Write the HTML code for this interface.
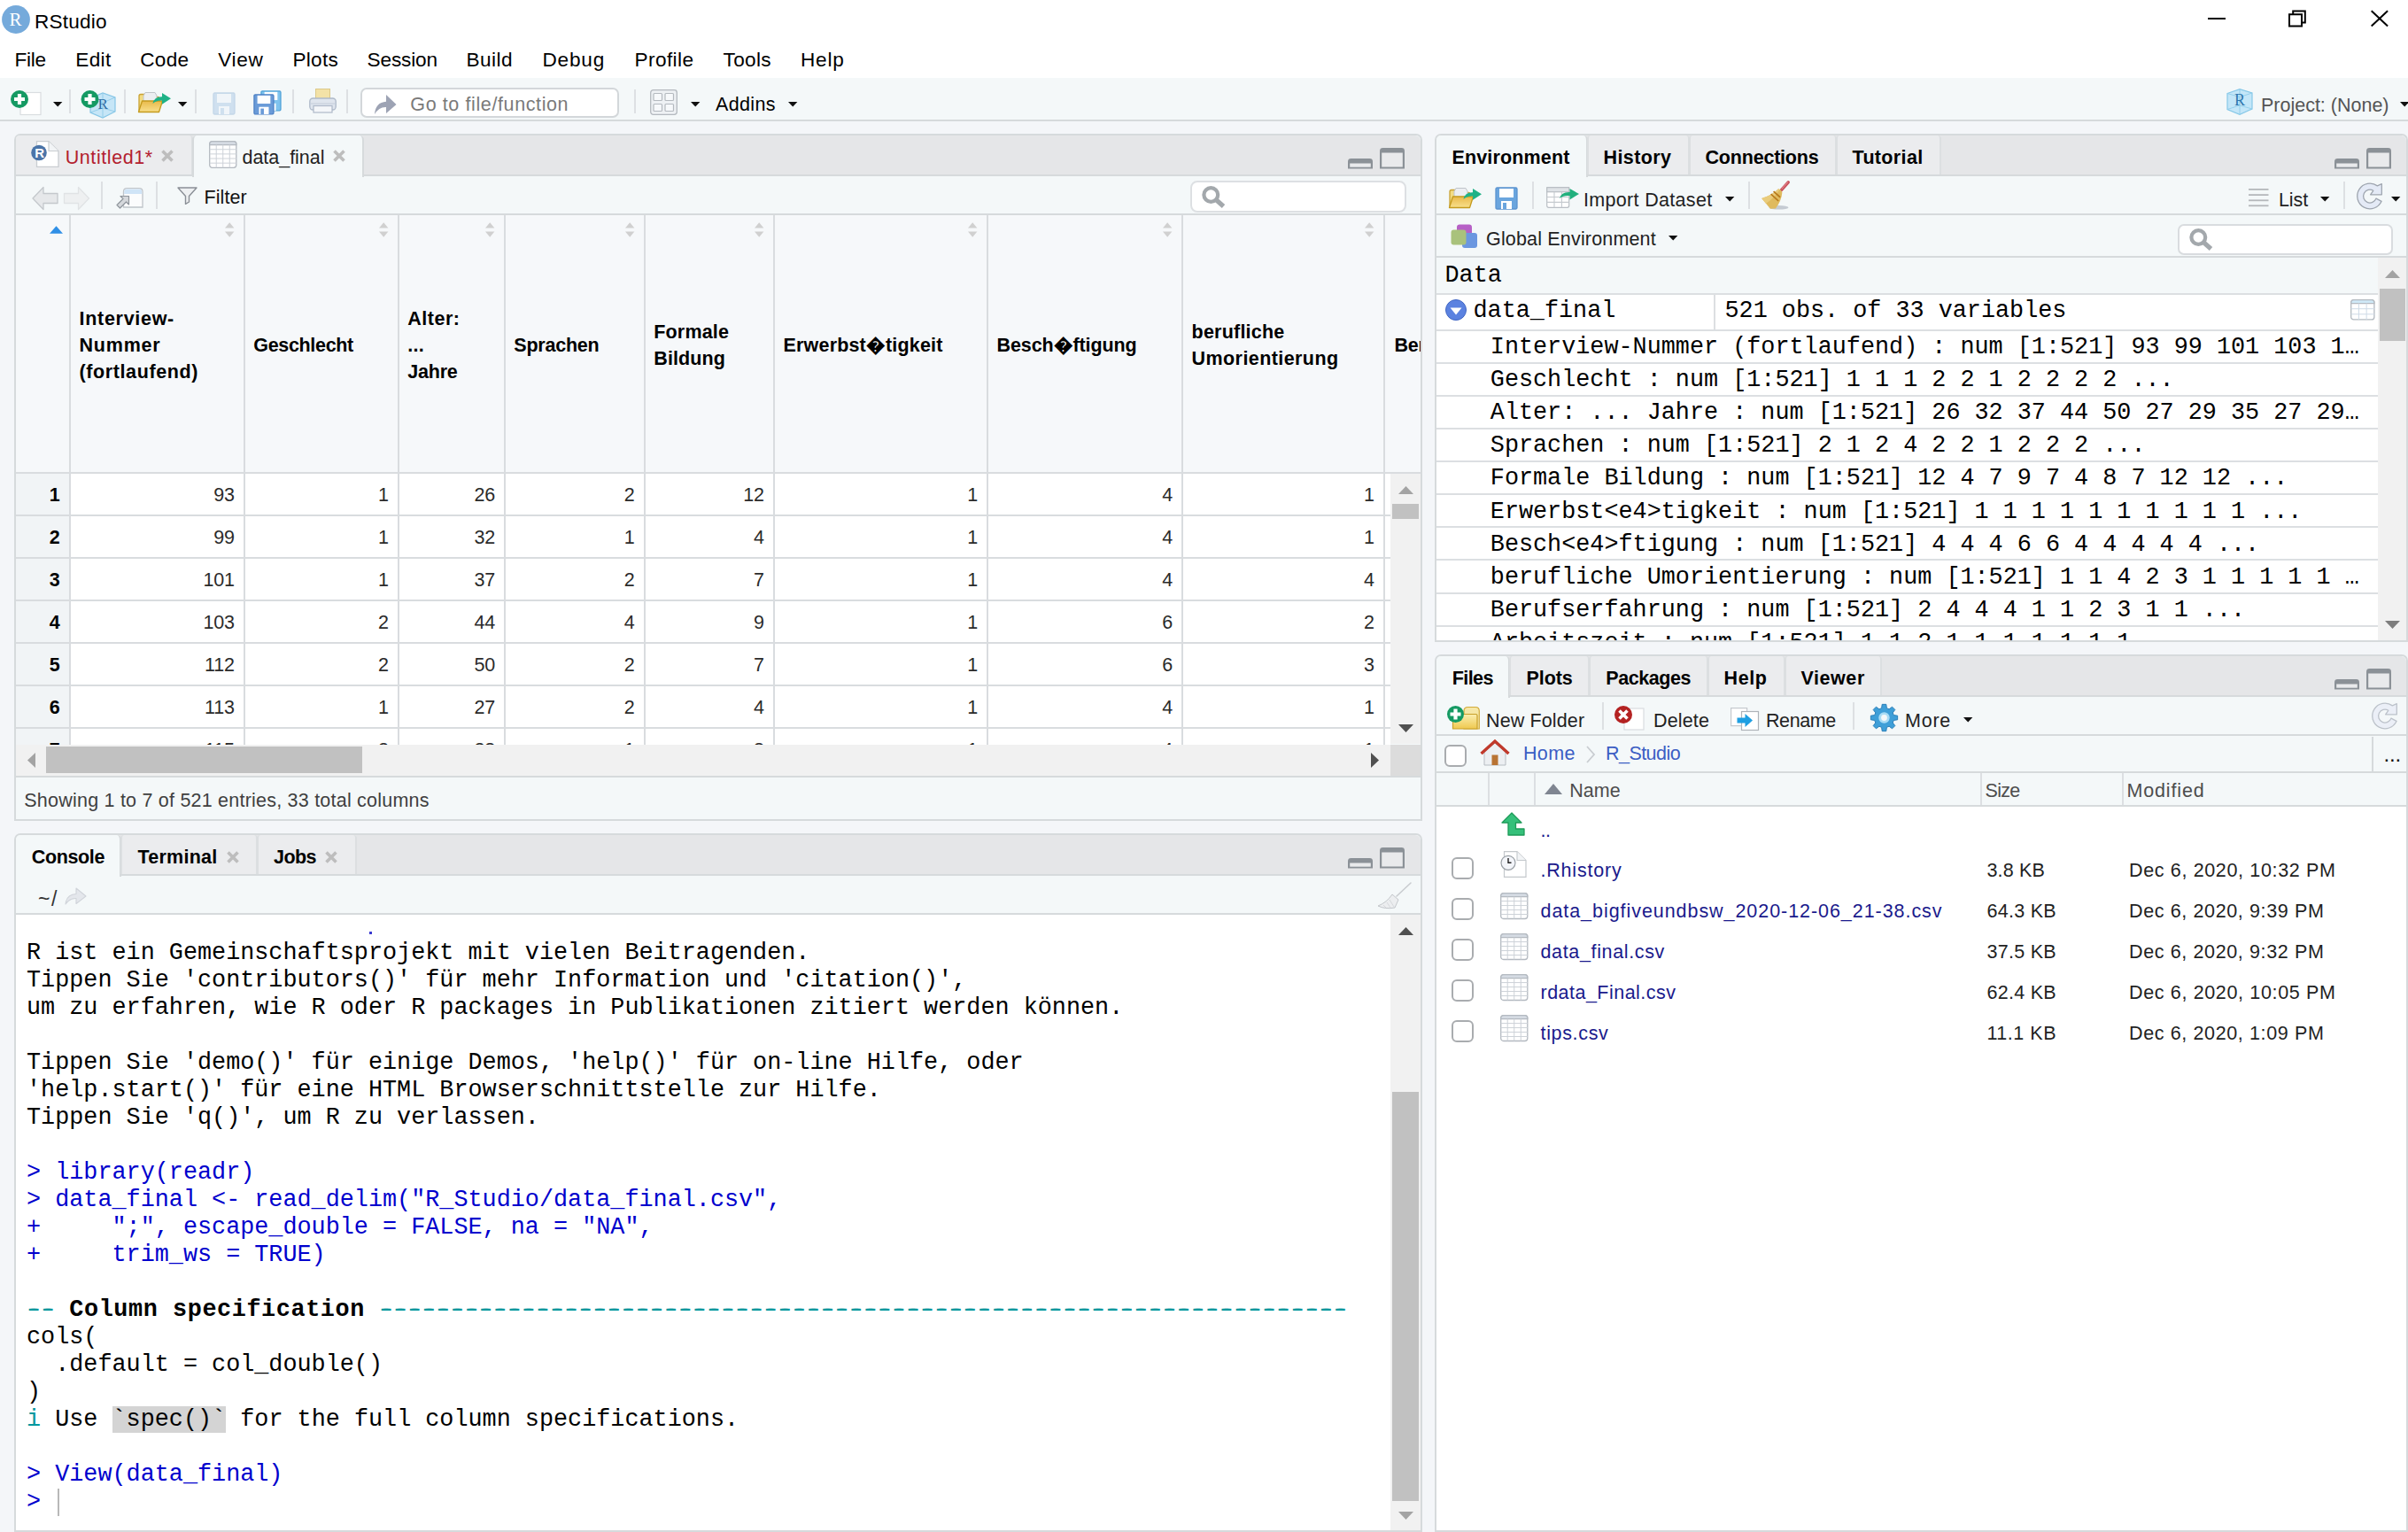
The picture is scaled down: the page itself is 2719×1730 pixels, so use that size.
<!DOCTYPE html>
<html lang="de"><head><meta charset="utf-8"><title>RStudio</title><style>
html,body{margin:0;padding:0;}
body{width:2719px;height:1730px;overflow:hidden;position:relative;background:#f4f6f9;font-family:'Liberation Sans', sans-serif;}
.a{position:absolute;box-sizing:border-box;}
.t{position:absolute;white-space:pre;}
svg{overflow:visible;}
.con{position:absolute;white-space:pre;font-family:'Liberation Mono', monospace;font-size:26.8px;line-height:31px;color:#000;margin:0;}
.con b{letter-spacing:0.6px;}
.dsh{text-shadow:1.7px 0 0 currentColor,-1.7px 0 0 currentColor;}
.env{position:absolute;white-space:pre;font-family:'Liberation Mono', monospace;font-size:26.67px;line-height:37.2px;color:#000;margin:0;}
</style></head>
<body>
<div class="a" style="left:0px;top:0px;width:2719px;height:88px;background:#fff;"></div>
<svg class="a" style="left:2px;top:6px;" width="32" height="32" viewBox="0 0 32 32"><circle cx="16" cy="16" r="15.9" fill="#75aadb"/></svg>
<span class="t" style="font-family:'Liberation Serif', serif;font-size:21px;font-weight:400;color:#fff;line-height:21px;left:10.6px;top:11.7965px;">R</span>
<span class="t" style="font-family:'Liberation Sans', sans-serif;font-size:22.6px;font-weight:400;color:#000;line-height:22.6px;letter-spacing:0.173px;left:39.1px;top:13.9691px;">RStudio</span>
<svg class="a" style="left:2490px;top:8px;" width="210" height="26" viewBox="0 0 210 26"><path d="M3 13H23" stroke="#000" stroke-width="2" fill="none"/><path d="M95 8.3H109V21.5H95Z M99.2 8V4.5H112.8V17.5H109.3" stroke="#000" stroke-width="2" fill="none"/><path d="M187.7 4.2L206.1 21.6 M206.1 4.2L187.7 21.6" stroke="#000" stroke-width="2" fill="none"/></svg>
<span class="t" style="font-family:'Liberation Sans', sans-serif;font-size:22.6px;font-weight:400;color:#000;line-height:22.6px;letter-spacing:-0.252px;left:16.4px;top:57.2691px;">File</span>
<span class="t" style="font-family:'Liberation Sans', sans-serif;font-size:22.6px;font-weight:400;color:#000;line-height:22.6px;letter-spacing:0.316px;left:85.3px;top:57.2691px;">Edit</span>
<span class="t" style="font-family:'Liberation Sans', sans-serif;font-size:22.6px;font-weight:400;color:#000;line-height:22.6px;letter-spacing:0.321px;left:158.2px;top:57.2691px;">Code</span>
<span class="t" style="font-family:'Liberation Sans', sans-serif;font-size:22.6px;font-weight:400;color:#000;line-height:22.6px;letter-spacing:0.655px;left:246.3px;top:57.2691px;">View</span>
<span class="t" style="font-family:'Liberation Sans', sans-serif;font-size:22.6px;font-weight:400;color:#000;line-height:22.6px;letter-spacing:0.253px;left:330.5px;top:57.2691px;">Plots</span>
<span class="t" style="font-family:'Liberation Sans', sans-serif;font-size:22.6px;font-weight:400;color:#000;line-height:22.6px;letter-spacing:-0.127px;left:414.5px;top:57.2691px;">Session</span>
<span class="t" style="font-family:'Liberation Sans', sans-serif;font-size:22.6px;font-weight:400;color:#000;line-height:22.6px;letter-spacing:0.450px;left:526.5px;top:57.2691px;">Build</span>
<span class="t" style="font-family:'Liberation Sans', sans-serif;font-size:22.6px;font-weight:400;color:#000;line-height:22.6px;letter-spacing:0.781px;left:612.5px;top:57.2691px;">Debug</span>
<span class="t" style="font-family:'Liberation Sans', sans-serif;font-size:22.6px;font-weight:400;color:#000;line-height:22.6px;letter-spacing:0.422px;left:716.5px;top:57.2691px;">Profile</span>
<span class="t" style="font-family:'Liberation Sans', sans-serif;font-size:22.6px;font-weight:400;color:#000;line-height:22.6px;letter-spacing:0.350px;left:816.5px;top:57.2691px;">Tools</span>
<span class="t" style="font-family:'Liberation Sans', sans-serif;font-size:22.6px;font-weight:400;color:#000;line-height:22.6px;letter-spacing:0.758px;left:904px;top:57.2691px;">Help</span>
<div class="a" style="left:0px;top:88px;width:2719px;height:49px;background:#f4f8f9;"></div>
<div class="a" style="left:0px;top:135px;width:2719px;height:2px;background:#d6dadc;"></div>
<svg class="a" style="left:12px;top:101px;" width="36" height="32" viewBox="0 0 36 32"><rect x="11" y="3.5" width="23" height="25" fill="#fff" stroke="#d9dde0" stroke-width="1.2"/><circle cx="10" cy="11" r="10" fill="#159a63"/><path d="M4 11H16 M10 5V17" stroke="#fff" stroke-width="4.2" fill="none"/></svg>
<svg class="a" style="left:59.6px;top:115.1px;" width="10.4" height="5.4" viewBox="0 0 10.4 5.4"><path d="M0 0H10.4L5.2 5.4Z" fill="#111"/></svg>
<div class="a" style="left:78px;top:101px;width:2px;height:27px;background:#dde0e3;"></div>
<svg class="a" style="left:91px;top:101px;" width="40" height="34" viewBox="0 0 40 34"><path d="M11 10L25 4L39 9V25L25 32L11 26Z" fill="#c6e6f7" stroke="#86c6e6" stroke-width="1.2"/><path d="M11 10L25 15L39 9M25 15V32M11 26L25 21L39 25M25 4V21" stroke="#8fcbe8" stroke-width="0.9" fill="none"/><text x="19.5" y="21.5" font-family="Liberation Serif, serif" font-size="17" fill="#2e6da4">R</text><circle cx="10.5" cy="11" r="10" fill="#159a63"/><path d="M4.5 11H16.5 M10.5 5V17" stroke="#fff" stroke-width="4.2" fill="none"/></svg>
<div class="a" style="left:139.8px;top:101px;width:2px;height:27px;background:#dde0e3;"></div>
<svg class="a" style="left:154px;top:102px;" width="40" height="28" viewBox="0 0 40 28"><defs><linearGradient id="fg1" x1="0" y1="0" x2="0" y2="1"><stop offset="0" stop-color="#e9b94a"/><stop offset="1" stop-color="#f8e08c"/></linearGradient></defs><path d="M3 23V6.5Q3 4.5 5 4.5H11L14 7.5H24Q26 7.5 26 9.5V13" fill="#f3dc83" stroke="#c9a132" stroke-width="1.3"/><path d="M8 6L10 2.5H21L23 6V14H8Z" fill="#eceef1" stroke="#bfc4c9" stroke-width="1"/><path d="M6.5 12H29.5L25.5 24.5H2.5Z" fill="url(#fg1)" stroke="#c49a1c" stroke-width="1.3" stroke-linejoin="round"/><path d="M18.5 15Q20 7 29 7.3V3L39 9.3L29 15.7V11.5Q22.5 11 18.5 15Z" fill="#1fb287"/></svg>
<svg class="a" style="left:201.4px;top:115.1px;" width="10.4" height="5.4" viewBox="0 0 10.4 5.4"><path d="M0 0H10.4L5.2 5.4Z" fill="#111"/></svg>
<div class="a" style="left:219.5px;top:101px;width:2px;height:27px;background:#dde0e3;"></div>
<svg class="a" style="left:240px;top:104px;" width="26" height="26" viewBox="0 0 26 26"><path d="M1 2.5Q1 1 2.5 1H23.5Q25 1 25 2.5V23.5Q25 25 23.5 25H2.5Q1 25 1 23.5Z" fill="#cfe0ef" stroke="#c3d6e8" stroke-width="1.3"/><rect x="5" y="2" width="16" height="10" fill="#f0f5f9"/><rect x="7" y="16" width="12" height="9" fill="#f0f5f9"/><rect x="9" y="18" width="4" height="7" fill="#cfe0ef"/></svg>
<svg class="a" style="left:286px;top:102px;" width="32" height="28" viewBox="0 0 32 28"><g transform="translate(8,0) scale(0.92)"><path d="M1 2.5Q1 1 2.5 1H23.5Q25 1 25 2.5V23.5Q25 25 23.5 25H2.5Q1 25 1 23.5Z" fill="#7fc3ee" stroke="#4a9fd6" stroke-width="1.3"/><rect x="5" y="2" width="16" height="10" fill="#fff"/><rect x="7" y="16" width="12" height="9" fill="#fff"/><rect x="9" y="18" width="4" height="7" fill="#7fc3ee"/></g><g transform="translate(0,4) scale(0.92)"><path d="M1 2.5Q1 1 2.5 1H23.5Q25 1 25 2.5V23.5Q25 25 23.5 25H2.5Q1 25 1 23.5Z" fill="#6a9bd8" stroke="#4a7fc4" stroke-width="1.3"/><rect x="5" y="2" width="16" height="10" fill="#fff"/><rect x="7" y="16" width="12" height="9" fill="#fff"/><rect x="9" y="18" width="4" height="7" fill="#6a9bd8"/></g></svg>
<div class="a" style="left:329.6px;top:101px;width:2px;height:27px;background:#dde0e3;"></div>
<svg class="a" style="left:348.5px;top:100px;" width="31" height="28" viewBox="0 0 31 28"><rect x="7.5" y="0.5" width="16" height="13" fill="#f3e2a7" stroke="#dcc98a" stroke-width="1"/><rect x="0.8" y="11" width="29.4" height="13" rx="3.5" fill="#dfe5ee" stroke="#aeb9c9" stroke-width="1.3"/><rect x="5" y="19.5" width="21" height="7.5" fill="#f4f6f9" stroke="#aeb9c9" stroke-width="1.2"/><path d="M2 17H29" stroke="#c3ccd9" stroke-width="1"/></svg>
<div class="a" style="left:391.4px;top:101px;width:2px;height:27px;background:#dde0e3;"></div>
<div class="a" style="left:407px;top:98.5px;width:292px;height:34.5px;background:#fff;border:2px solid #d3d7da;border-radius:7px;"></div>
<svg class="a" style="left:422px;top:106px;" width="26" height="24" viewBox="0 0 26 24"><path d="M1 23Q2 9.5 14 8.8V1L25.5 12L14 22V15Q6 14.5 1 23Z" fill="#9da3b4"/></svg>
<span class="t" style="font-family:'Liberation Sans', sans-serif;font-size:21.5px;font-weight:400;color:#7a7a7a;line-height:21.5px;letter-spacing:0.609px;left:463.3px;top:108.1px;">Go to file/function</span>
<div class="a" style="left:716px;top:101px;width:2px;height:27px;background:#dde0e3;"></div>
<svg class="a" style="left:734px;top:101px;" width="31" height="29" viewBox="0 0 31 29"><rect x="0.7" y="0.7" width="29.6" height="27.6" rx="3" fill="#eef1f4" stroke="#b4b9bf" stroke-width="1.3"/><rect x="4" y="4.5" width="9.5" height="8" rx="1" fill="#f7f9fb" stroke="#b4b9bf" stroke-width="1.2"/><rect x="17" y="4.5" width="9.5" height="8" rx="1" fill="#f7f9fb" stroke="#b4b9bf" stroke-width="1.2"/><rect x="4" y="16.5" width="9.5" height="8" rx="1" fill="#f7f9fb" stroke="#b4b9bf" stroke-width="1.2"/><rect x="17" y="16.5" width="9.5" height="8" rx="1" fill="#f7f9fb" stroke="#b4b9bf" stroke-width="1.2"/></svg>
<svg class="a" style="left:779.8px;top:114.9px;" width="10.4" height="5.4" viewBox="0 0 10.4 5.4"><path d="M0 0H10.4L5.2 5.4Z" fill="#111"/></svg>
<span class="t" style="font-family:'Liberation Sans', sans-serif;font-size:21.5px;font-weight:400;color:#000;line-height:21.5px;letter-spacing:0.358px;left:808px;top:107.8px;">Addins</span>
<svg class="a" style="left:889.8px;top:114.9px;" width="10.4" height="5.4" viewBox="0 0 10.4 5.4"><path d="M0 0H10.4L5.2 5.4Z" fill="#111"/></svg>
<svg class="a" style="left:2514px;top:100px;" width="30" height="30" viewBox="0 0 30 30"><path d="M1 5.5L15 0.7L29 5V23L15 29.3L1 23.5Z" fill="#c3e6f8" stroke="#86c8e8" stroke-width="1.2"/><path d="M1 5.5L15 9.5L29 5M15 9.5V29.3M1 23.5L15 19L29 23M15 0.7V19" stroke="#8fcdea" stroke-width="0.9" fill="none"/><text x="9" y="18.6" font-family="Liberation Serif, serif" font-size="18" fill="#2f77ad">R</text></svg>
<span class="t" style="font-family:'Liberation Sans', sans-serif;font-size:21.5px;font-weight:400;color:#555;line-height:21.5px;letter-spacing:-0.006px;left:2553px;top:108.8px;">Project: (None)</span>
<svg class="a" style="left:2709.8px;top:115px;" width="10.4" height="5.4" viewBox="0 0 10.4 5.4"><path d="M0 0H10.4L5.2 5.4Z" fill="#111"/></svg>
<div class="a" style="left:16px;top:151px;width:1590px;height:776px;background:#f4f8f9;border:2px solid #d6dadc;border-radius:7px 7px 0 0;"></div>
<div class="a" style="left:18px;top:153px;width:1586px;height:44px;background:#e5e6e8;border-radius:6px 6px 0 0;"></div>
<div class="a" style="left:18px;top:197px;width:1586px;height:2px;background:#d6dadc;"></div>
<div class="a" style="left:18px;top:153px;width:200px;height:44px;background:#ebecee;border:2px solid #dcdfe1;border-radius:4px 4px 0 0;border-bottom:none;border-top:none;border-left:none;"></div>
<div class="a" style="left:217px;top:153px;width:194px;height:47px;background:#f4f8f9;border:2px solid #d6dadc;border-radius:5px 5px 0 0;border-bottom:none;border-top:none;"></div>
<svg class="a" style="left:34.5px;top:158.8px;" width="32" height="30" viewBox="0 0 32 30"><path d="M6.5 0.7H20L31 11.5V29.3H6.5Z" fill="#fff" stroke="#c9cdd1" stroke-width="1.3"/><path d="M20 0.7V11.5H31" fill="#f2f4f6" stroke="#c9cdd1" stroke-width="1.2"/><circle cx="9" cy="13.5" r="8.8" fill="#4a74a8"/><text x="4.3" y="19" font-family="Liberation Sans, sans-serif" font-weight="700" font-size="15" fill="#fff">R</text></svg>
<span class="t" style="font-family:'Liberation Sans', sans-serif;font-size:21.5px;font-weight:400;color:#b3202f;line-height:21.5px;letter-spacing:0.587px;left:73.7px;top:167.6px;">Untitled1*</span>
<svg class="a" style="left:182.3px;top:169.4px;" width="14" height="14" viewBox="0 0 14 14"><path d="M1.5 1.5L12.5 12.5M12.5 1.5L1.5 12.5" stroke="#bdbdbd" stroke-width="3.6" fill="none"/></svg>
<svg class="a" style="left:236.3px;top:159px;" width="31.5" height="31" viewBox="0 0 31.5 31"><rect x="0.7" y="0.7" width="30.1" height="29.6" rx="3" fill="#fff" stroke="#b3b9c0" stroke-width="1.3"/><path d="M0.7 4.6V3.7Q0.7 0.7 3.7 0.7H27.8Q30.8 0.7 30.8 3.7V4.6Z" fill="#d5dbe3" stroke="#b3b9c0" stroke-width="1.3"/><path d="M8.225 4.6V30.3" stroke="#cdd2d8" stroke-width="1"/><path d="M15.75 4.6V30.3" stroke="#cdd2d8" stroke-width="1"/><path d="M23.275 4.6V30.3" stroke="#cdd2d8" stroke-width="1"/><path d="M0.7 9.74H30.8" stroke="#cdd2d8" stroke-width="1"/><path d="M0.7 14.88H30.8" stroke="#cdd2d8" stroke-width="1"/><path d="M0.7 20.02H30.8" stroke="#cdd2d8" stroke-width="1"/><path d="M0.7 25.16H30.8" stroke="#cdd2d8" stroke-width="1"/></svg>
<span class="t" style="font-family:'Liberation Sans', sans-serif;font-size:21.5px;font-weight:400;color:#222;line-height:21.5px;letter-spacing:-0.035px;left:273.5px;top:167.6px;">data_final</span>
<svg class="a" style="left:376.1px;top:169.4px;" width="14" height="14" viewBox="0 0 14 14"><path d="M1.5 1.5L12.5 12.5M12.5 1.5L1.5 12.5" stroke="#bdbdbd" stroke-width="3.6" fill="none"/></svg>
<svg class="a" style="left:1522px;top:179.2px;" width="28" height="11.6" viewBox="0 0 28 11.6"><path d="M0 11.6V3.5Q0 0 3.5 0H24.5Q28 0 28 3.5V11.6Z" fill="#8b9197"/><rect x="2.2" y="5.5" width="23.6" height="4.2" fill="#e9eaec"/></svg>
<svg class="a" style="left:1558px;top:167.2px;" width="28" height="23.6" viewBox="0 0 28 23.6"><path d="M0 23.6V3.5Q0 0 3.5 0H24.5Q28 0 28 3.5V23.6Z" fill="#8b9197"/><rect x="2.2" y="5.5" width="23.6" height="16" fill="#e9eaec"/></svg>
<div class="a" style="left:18px;top:241px;width:1586px;height:2px;background:#d6dadc;"></div>
<svg class="a" style="left:35.5px;top:209.8px;" width="66" height="28" viewBox="0 0 66 28"><path d="M1 14L13 1.5V8.5H29V19.5H13V26.5Z" fill="#e6e8ea" stroke="#c4c8cc" stroke-width="1.3" stroke-linejoin="round"/><path d="M64.5 14L52.5 1.5V8.5H36.5V19.5H52.5V26.5Z" fill="#eef0f1" stroke="#e0e3e5" stroke-width="1.3" stroke-linejoin="round"/></svg>
<div class="a" style="left:113.8px;top:205px;width:2px;height:31px;background:#dde0e3;"></div>
<svg class="a" style="left:130.5px;top:211.5px;" width="31" height="23" viewBox="0 0 31 23"><path d="M8.5 22V4.5Q8.5 0.7 12.5 0.7H26Q30 0.7 30 4.5V22Z" fill="#fbfcfd" stroke="#bfc4c9" stroke-width="1.3"/><path d="M9.2 7V4.5Q9.2 1.4 12.5 1.4H26Q29.3 1.4 29.3 4.5V7Z" fill="#cfe4f7"/><path d="M1 19.5L8 12.5L5 9.5H14.5V19L11.5 16L4.5 23Z" fill="#d5d8dc" stroke="#8f959c" stroke-width="1.2" stroke-linejoin="round"/></svg>
<div class="a" style="left:175.7px;top:205px;width:2px;height:31px;background:#dde0e3;"></div>
<svg class="a" style="left:199.5px;top:210.5px;" width="23" height="20" viewBox="0 0 23 20"><path d="M1 1H22L13.5 10.5V17L9.5 19.3V10.5Z" fill="#eef0f2" stroke="#8a8f96" stroke-width="1.4" stroke-linejoin="round"/></svg>
<span class="t" style="font-family:'Liberation Sans', sans-serif;font-size:21.5px;font-weight:400;color:#111;line-height:21.5px;letter-spacing:0.070px;left:230.5px;top:212.6px;">Filter</span>
<div class="a" style="left:1343.8px;top:203.8px;width:244.4px;height:36.2px;background:#fff;border:2px solid #dde0e3;border-radius:8px;"></div>
<svg class="a" style="left:1357px;top:210px;" width="27" height="25" viewBox="0 0 27 25"><circle cx="10.3" cy="10" r="7.9" fill="none" stroke="#a3a8ac" stroke-width="4.2"/><path d="M16 15.5L24.5 23" stroke="#a3a8ac" stroke-width="5.2" stroke-linecap="butt"/></svg>
<div class="a" style="left:18px;top:243px;width:1586px;height:290px;background:#f6f8fa;"></div>
<div class="a" style="left:18px;top:535px;width:1552px;height:305.6px;background:#fff;"></div>
<div class="a" style="left:18px;top:535px;width:61px;height:305.6px;background:#f1f4f6;"></div>
<div class="a" style="left:18px;top:533px;width:1586px;height:2px;background:#d9dcdf;"></div>
<div class="a" style="left:18px;top:581px;width:1552px;height:2px;background:#d9dcdf;"></div>
<div class="a" style="left:18px;top:629px;width:1552px;height:2px;background:#d9dcdf;"></div>
<div class="a" style="left:18px;top:677px;width:1552px;height:2px;background:#d9dcdf;"></div>
<div class="a" style="left:18px;top:725px;width:1552px;height:2px;background:#d9dcdf;"></div>
<div class="a" style="left:18px;top:773px;width:1552px;height:2px;background:#d9dcdf;"></div>
<div class="a" style="left:18px;top:821px;width:1552px;height:2px;background:#d9dcdf;"></div>
<div class="a" style="left:78px;top:243px;width:2px;height:597.6px;background:#d9dcdf;"></div>
<div class="a" style="left:274.8px;top:243px;width:2px;height:597.6px;background:#d9dcdf;"></div>
<div class="a" style="left:448.8px;top:243px;width:2px;height:597.6px;background:#d9dcdf;"></div>
<div class="a" style="left:569px;top:243px;width:2px;height:597.6px;background:#d9dcdf;"></div>
<div class="a" style="left:726.7px;top:243px;width:2px;height:597.6px;background:#d9dcdf;"></div>
<div class="a" style="left:872.9px;top:243px;width:2px;height:597.6px;background:#d9dcdf;"></div>
<div class="a" style="left:1114px;top:243px;width:2px;height:597.6px;background:#d9dcdf;"></div>
<div class="a" style="left:1334px;top:243px;width:2px;height:597.6px;background:#d9dcdf;"></div>
<div class="a" style="left:1561.8px;top:243px;width:2px;height:597.6px;background:#d9dcdf;"></div>
<svg class="a" style="left:55.5px;top:254.5px;" width="15" height="9" viewBox="0 0 15 9"><path d="M0 8.7L7.5 0.3L15 8.7Z" fill="#2f8fe6"/></svg>
<svg class="a" style="left:254.1px;top:250.5px;" width="10.4" height="17" viewBox="0 0 10.4 17"><path d="M0 6.5L5.2 0.3L10.4 6.5Z M0 10.5L5.2 16.7L10.4 10.5Z" fill="#d0d0d0"/></svg>
<svg class="a" style="left:428.1px;top:250.5px;" width="10.4" height="17" viewBox="0 0 10.4 17"><path d="M0 6.5L5.2 0.3L10.4 6.5Z M0 10.5L5.2 16.7L10.4 10.5Z" fill="#d0d0d0"/></svg>
<svg class="a" style="left:548.3px;top:250.5px;" width="10.4" height="17" viewBox="0 0 10.4 17"><path d="M0 6.5L5.2 0.3L10.4 6.5Z M0 10.5L5.2 16.7L10.4 10.5Z" fill="#d0d0d0"/></svg>
<svg class="a" style="left:706px;top:250.5px;" width="10.4" height="17" viewBox="0 0 10.4 17"><path d="M0 6.5L5.2 0.3L10.4 6.5Z M0 10.5L5.2 16.7L10.4 10.5Z" fill="#d0d0d0"/></svg>
<svg class="a" style="left:852.2px;top:250.5px;" width="10.4" height="17" viewBox="0 0 10.4 17"><path d="M0 6.5L5.2 0.3L10.4 6.5Z M0 10.5L5.2 16.7L10.4 10.5Z" fill="#d0d0d0"/></svg>
<svg class="a" style="left:1093.3px;top:250.5px;" width="10.4" height="17" viewBox="0 0 10.4 17"><path d="M0 6.5L5.2 0.3L10.4 6.5Z M0 10.5L5.2 16.7L10.4 10.5Z" fill="#d0d0d0"/></svg>
<svg class="a" style="left:1313.3px;top:250.5px;" width="10.4" height="17" viewBox="0 0 10.4 17"><path d="M0 6.5L5.2 0.3L10.4 6.5Z M0 10.5L5.2 16.7L10.4 10.5Z" fill="#d0d0d0"/></svg>
<svg class="a" style="left:1541.1px;top:250.5px;" width="10.4" height="17" viewBox="0 0 10.4 17"><path d="M0 6.5L5.2 0.3L10.4 6.5Z M0 10.5L5.2 16.7L10.4 10.5Z" fill="#d0d0d0"/></svg>
<span class="t" style="font-family:'Liberation Sans', sans-serif;font-size:21.5px;font-weight:700;color:#000;line-height:21.5px;letter-spacing:0.713px;left:89.5px;top:349.9px;">Interview-</span>
<span class="t" style="font-family:'Liberation Sans', sans-serif;font-size:21.5px;font-weight:700;color:#000;line-height:21.5px;letter-spacing:0.797px;left:89.5px;top:379.7px;">Nummer</span>
<span class="t" style="font-family:'Liberation Sans', sans-serif;font-size:21.5px;font-weight:700;color:#000;line-height:21.5px;letter-spacing:0.608px;left:89.5px;top:409.5px;">(fortlaufend)</span>
<span class="t" style="font-family:'Liberation Sans', sans-serif;font-size:21.5px;font-weight:700;color:#000;line-height:21.5px;letter-spacing:-0.332px;left:286.3px;top:379.7px;">Geschlecht</span>
<span class="t" style="font-family:'Liberation Sans', sans-serif;font-size:21.5px;font-weight:700;color:#000;line-height:21.5px;letter-spacing:0.507px;left:460.3px;top:349.9px;">Alter:</span>
<span class="t" style="font-family:'Liberation Sans', sans-serif;font-size:21.5px;font-weight:700;color:#000;line-height:21.5px;letter-spacing:0.259px;left:460.3px;top:379.7px;">...</span>
<span class="t" style="font-family:'Liberation Sans', sans-serif;font-size:21.5px;font-weight:700;color:#000;line-height:21.5px;letter-spacing:-0.235px;left:460.3px;top:409.5px;">Jahre</span>
<span class="t" style="font-family:'Liberation Sans', sans-serif;font-size:21.5px;font-weight:700;color:#000;line-height:21.5px;letter-spacing:-0.223px;left:580.3px;top:379.7px;">Sprachen</span>
<span class="t" style="font-family:'Liberation Sans', sans-serif;font-size:21.5px;font-weight:700;color:#000;line-height:21.5px;letter-spacing:0.151px;left:738.3px;top:364.8px;">Formale</span>
<span class="t" style="font-family:'Liberation Sans', sans-serif;font-size:21.5px;font-weight:700;color:#000;line-height:21.5px;letter-spacing:0.098px;left:738.3px;top:394.6px;">Bildung</span>
<span class="t" style="font-family:'Liberation Sans', sans-serif;font-size:21.5px;font-weight:700;color:#000;line-height:21.5px;letter-spacing:0.161px;left:884.6px;top:379.7px;">Erwerbst�tigkeit</span>
<span class="t" style="font-family:'Liberation Sans', sans-serif;font-size:21.5px;font-weight:700;color:#000;line-height:21.5px;letter-spacing:-0.112px;left:1125.6px;top:379.7px;">Besch�ftigung</span>
<span class="t" style="font-family:'Liberation Sans', sans-serif;font-size:21.5px;font-weight:700;color:#000;line-height:21.5px;letter-spacing:0.215px;left:1345.6px;top:364.8px;">berufliche</span>
<span class="t" style="font-family:'Liberation Sans', sans-serif;font-size:21.5px;font-weight:700;color:#000;line-height:21.5px;letter-spacing:0.416px;left:1345.6px;top:394.6px;">Umorientierung</span>
<div class="a" style="left:1564px;top:360px;width:40px;height:60px;overflow:hidden;"><span class="t" style="left:10.5px;top:19.7002px;font-size:21.5px;line-height:21.5px;font-weight:700;letter-spacing:-0.3px;">Berufserfahrung</span></div>
<div class="a" style="left:0;top:535px;width:1570px;height:305.6px;overflow:hidden;">
<span class="t" style="right:1502.2px;top:14.1003px;font-size:21.5px;line-height:21.5px;font-weight:700;">1</span>
<span class="t" style="right:1305.3px;top:14.1003px;font-size:21.5px;line-height:21.5px;color:#2b2b2b;letter-spacing:-0.2px;">93</span>
<span class="t" style="right:1131.3px;top:14.1003px;font-size:21.5px;line-height:21.5px;color:#2b2b2b;letter-spacing:-0.2px;">1</span>
<span class="t" style="right:1011.1px;top:14.1003px;font-size:21.5px;line-height:21.5px;color:#2b2b2b;letter-spacing:-0.2px;">26</span>
<span class="t" style="right:853.4px;top:14.1003px;font-size:21.5px;line-height:21.5px;color:#2b2b2b;letter-spacing:-0.2px;">2</span>
<span class="t" style="right:707.2px;top:14.1003px;font-size:21.5px;line-height:21.5px;color:#2b2b2b;letter-spacing:-0.2px;">12</span>
<span class="t" style="right:466.1px;top:14.1003px;font-size:21.5px;line-height:21.5px;color:#2b2b2b;letter-spacing:-0.2px;">1</span>
<span class="t" style="right:246.1px;top:14.1003px;font-size:21.5px;line-height:21.5px;color:#2b2b2b;letter-spacing:-0.2px;">4</span>
<span class="t" style="right:18.3px;top:14.1003px;font-size:21.5px;line-height:21.5px;color:#2b2b2b;letter-spacing:-0.2px;">1</span>
<span class="t" style="right:1502.2px;top:62.1003px;font-size:21.5px;line-height:21.5px;font-weight:700;">2</span>
<span class="t" style="right:1305.3px;top:62.1003px;font-size:21.5px;line-height:21.5px;color:#2b2b2b;letter-spacing:-0.2px;">99</span>
<span class="t" style="right:1131.3px;top:62.1003px;font-size:21.5px;line-height:21.5px;color:#2b2b2b;letter-spacing:-0.2px;">1</span>
<span class="t" style="right:1011.1px;top:62.1003px;font-size:21.5px;line-height:21.5px;color:#2b2b2b;letter-spacing:-0.2px;">32</span>
<span class="t" style="right:853.4px;top:62.1003px;font-size:21.5px;line-height:21.5px;color:#2b2b2b;letter-spacing:-0.2px;">1</span>
<span class="t" style="right:707.2px;top:62.1003px;font-size:21.5px;line-height:21.5px;color:#2b2b2b;letter-spacing:-0.2px;">4</span>
<span class="t" style="right:466.1px;top:62.1003px;font-size:21.5px;line-height:21.5px;color:#2b2b2b;letter-spacing:-0.2px;">1</span>
<span class="t" style="right:246.1px;top:62.1003px;font-size:21.5px;line-height:21.5px;color:#2b2b2b;letter-spacing:-0.2px;">4</span>
<span class="t" style="right:18.3px;top:62.1003px;font-size:21.5px;line-height:21.5px;color:#2b2b2b;letter-spacing:-0.2px;">1</span>
<span class="t" style="right:1502.2px;top:110.1px;font-size:21.5px;line-height:21.5px;font-weight:700;">3</span>
<span class="t" style="right:1305.3px;top:110.1px;font-size:21.5px;line-height:21.5px;color:#2b2b2b;letter-spacing:-0.2px;">101</span>
<span class="t" style="right:1131.3px;top:110.1px;font-size:21.5px;line-height:21.5px;color:#2b2b2b;letter-spacing:-0.2px;">1</span>
<span class="t" style="right:1011.1px;top:110.1px;font-size:21.5px;line-height:21.5px;color:#2b2b2b;letter-spacing:-0.2px;">37</span>
<span class="t" style="right:853.4px;top:110.1px;font-size:21.5px;line-height:21.5px;color:#2b2b2b;letter-spacing:-0.2px;">2</span>
<span class="t" style="right:707.2px;top:110.1px;font-size:21.5px;line-height:21.5px;color:#2b2b2b;letter-spacing:-0.2px;">7</span>
<span class="t" style="right:466.1px;top:110.1px;font-size:21.5px;line-height:21.5px;color:#2b2b2b;letter-spacing:-0.2px;">1</span>
<span class="t" style="right:246.1px;top:110.1px;font-size:21.5px;line-height:21.5px;color:#2b2b2b;letter-spacing:-0.2px;">4</span>
<span class="t" style="right:18.3px;top:110.1px;font-size:21.5px;line-height:21.5px;color:#2b2b2b;letter-spacing:-0.2px;">4</span>
<span class="t" style="right:1502.2px;top:158.1px;font-size:21.5px;line-height:21.5px;font-weight:700;">4</span>
<span class="t" style="right:1305.3px;top:158.1px;font-size:21.5px;line-height:21.5px;color:#2b2b2b;letter-spacing:-0.2px;">103</span>
<span class="t" style="right:1131.3px;top:158.1px;font-size:21.5px;line-height:21.5px;color:#2b2b2b;letter-spacing:-0.2px;">2</span>
<span class="t" style="right:1011.1px;top:158.1px;font-size:21.5px;line-height:21.5px;color:#2b2b2b;letter-spacing:-0.2px;">44</span>
<span class="t" style="right:853.4px;top:158.1px;font-size:21.5px;line-height:21.5px;color:#2b2b2b;letter-spacing:-0.2px;">4</span>
<span class="t" style="right:707.2px;top:158.1px;font-size:21.5px;line-height:21.5px;color:#2b2b2b;letter-spacing:-0.2px;">9</span>
<span class="t" style="right:466.1px;top:158.1px;font-size:21.5px;line-height:21.5px;color:#2b2b2b;letter-spacing:-0.2px;">1</span>
<span class="t" style="right:246.1px;top:158.1px;font-size:21.5px;line-height:21.5px;color:#2b2b2b;letter-spacing:-0.2px;">6</span>
<span class="t" style="right:18.3px;top:158.1px;font-size:21.5px;line-height:21.5px;color:#2b2b2b;letter-spacing:-0.2px;">2</span>
<span class="t" style="right:1502.2px;top:206.1px;font-size:21.5px;line-height:21.5px;font-weight:700;">5</span>
<span class="t" style="right:1305.3px;top:206.1px;font-size:21.5px;line-height:21.5px;color:#2b2b2b;letter-spacing:-0.2px;">112</span>
<span class="t" style="right:1131.3px;top:206.1px;font-size:21.5px;line-height:21.5px;color:#2b2b2b;letter-spacing:-0.2px;">2</span>
<span class="t" style="right:1011.1px;top:206.1px;font-size:21.5px;line-height:21.5px;color:#2b2b2b;letter-spacing:-0.2px;">50</span>
<span class="t" style="right:853.4px;top:206.1px;font-size:21.5px;line-height:21.5px;color:#2b2b2b;letter-spacing:-0.2px;">2</span>
<span class="t" style="right:707.2px;top:206.1px;font-size:21.5px;line-height:21.5px;color:#2b2b2b;letter-spacing:-0.2px;">7</span>
<span class="t" style="right:466.1px;top:206.1px;font-size:21.5px;line-height:21.5px;color:#2b2b2b;letter-spacing:-0.2px;">1</span>
<span class="t" style="right:246.1px;top:206.1px;font-size:21.5px;line-height:21.5px;color:#2b2b2b;letter-spacing:-0.2px;">6</span>
<span class="t" style="right:18.3px;top:206.1px;font-size:21.5px;line-height:21.5px;color:#2b2b2b;letter-spacing:-0.2px;">3</span>
<span class="t" style="right:1502.2px;top:254.1px;font-size:21.5px;line-height:21.5px;font-weight:700;">6</span>
<span class="t" style="right:1305.3px;top:254.1px;font-size:21.5px;line-height:21.5px;color:#2b2b2b;letter-spacing:-0.2px;">113</span>
<span class="t" style="right:1131.3px;top:254.1px;font-size:21.5px;line-height:21.5px;color:#2b2b2b;letter-spacing:-0.2px;">1</span>
<span class="t" style="right:1011.1px;top:254.1px;font-size:21.5px;line-height:21.5px;color:#2b2b2b;letter-spacing:-0.2px;">27</span>
<span class="t" style="right:853.4px;top:254.1px;font-size:21.5px;line-height:21.5px;color:#2b2b2b;letter-spacing:-0.2px;">2</span>
<span class="t" style="right:707.2px;top:254.1px;font-size:21.5px;line-height:21.5px;color:#2b2b2b;letter-spacing:-0.2px;">4</span>
<span class="t" style="right:466.1px;top:254.1px;font-size:21.5px;line-height:21.5px;color:#2b2b2b;letter-spacing:-0.2px;">1</span>
<span class="t" style="right:246.1px;top:254.1px;font-size:21.5px;line-height:21.5px;color:#2b2b2b;letter-spacing:-0.2px;">4</span>
<span class="t" style="right:18.3px;top:254.1px;font-size:21.5px;line-height:21.5px;color:#2b2b2b;letter-spacing:-0.2px;">1</span>
<span class="t" style="right:1502.2px;top:302.1px;font-size:21.5px;line-height:21.5px;font-weight:700;">7</span>
<span class="t" style="right:1305.3px;top:302.1px;font-size:21.5px;line-height:21.5px;color:#2b2b2b;letter-spacing:-0.2px;">115</span>
<span class="t" style="right:1131.3px;top:302.1px;font-size:21.5px;line-height:21.5px;color:#2b2b2b;letter-spacing:-0.2px;">2</span>
<span class="t" style="right:1011.1px;top:302.1px;font-size:21.5px;line-height:21.5px;color:#2b2b2b;letter-spacing:-0.2px;">28</span>
<span class="t" style="right:853.4px;top:302.1px;font-size:21.5px;line-height:21.5px;color:#2b2b2b;letter-spacing:-0.2px;">1</span>
<span class="t" style="right:707.2px;top:302.1px;font-size:21.5px;line-height:21.5px;color:#2b2b2b;letter-spacing:-0.2px;">8</span>
<span class="t" style="right:466.1px;top:302.1px;font-size:21.5px;line-height:21.5px;color:#2b2b2b;letter-spacing:-0.2px;">1</span>
<span class="t" style="right:246.1px;top:302.1px;font-size:21.5px;line-height:21.5px;color:#2b2b2b;letter-spacing:-0.2px;">4</span>
<span class="t" style="right:18.3px;top:302.1px;font-size:21.5px;line-height:21.5px;color:#2b2b2b;letter-spacing:-0.2px;">1</span>
</div>
<div class="a" style="left:1570px;top:535px;width:34px;height:305px;background:#f1f1f1;"></div>
<svg class="a" style="left:1578.5px;top:548.5px;" width="17" height="9" viewBox="0 0 17 9"><path d="M0 9L8.5 0L17 9Z" fill="#a3a3a3"/></svg>
<div class="a" style="left:1572px;top:569px;width:30px;height:17px;background:#c1c1c1;"></div>
<svg class="a" style="left:1578.5px;top:817.5px;" width="17" height="9" viewBox="0 0 17 9"><path d="M0 0L8.5 9L17 0Z" fill="#505050"/></svg>
<div class="a" style="left:18px;top:840.6px;width:1552px;height:35.4px;background:#f1f1f1;"></div>
<div class="a" style="left:1570px;top:840.6px;width:34px;height:35.4px;background:#dcdcdc;"></div>
<svg class="a" style="left:30.5px;top:849.5px;" width="9" height="17" viewBox="0 0 9 17"><path d="M9 0L0 8.5L9 17Z" fill="#a3a3a3"/></svg>
<div class="a" style="left:51.8px;top:842.5px;width:357px;height:30px;background:#c1c1c1;"></div>
<svg class="a" style="left:1548px;top:849.5px;" width="9" height="17" viewBox="0 0 9 17"><path d="M0 0L9 8.5L0 17Z" fill="#505050"/></svg>
<div class="a" style="left:18px;top:875.5px;width:1586px;height:2px;background:#d6dadc;"></div>
<span class="t" style="font-family:'Liberation Sans', sans-serif;font-size:21.5px;font-weight:400;color:#3f3f3f;line-height:21.5px;letter-spacing:0.221px;left:27.3px;top:894.3px;">Showing 1 to 7 of 521 entries, 33 total columns</span>
<div class="a" style="left:16px;top:941px;width:1590px;height:789px;background:#f4f8f9;border:2px solid #d6dadc;border-radius:7px 7px 0 0;"></div>
<div class="a" style="left:18px;top:943px;width:1586px;height:44px;background:#e5e6e8;border-radius:6px 6px 0 0;"></div>
<div class="a" style="left:18px;top:987px;width:1586px;height:2px;background:#d6dadc;"></div>
<div class="a" style="left:18px;top:943px;width:119px;height:47px;background:#f4f8f9;border:2px solid #d6dadc;border-radius:5px 5px 0 0;border-bottom:none;border-left:none;border-top:none;"></div>
<div class="a" style="left:136px;top:943px;width:155px;height:44px;background:#ebecee;border:2px solid #dcdfe1;border-radius:4px 4px 0 0;border-bottom:none;border-top:none;"></div>
<div class="a" style="left:290px;top:943px;width:112.5px;height:44px;background:#ebecee;border:2px solid #dcdfe1;border-radius:4px 4px 0 0;border-bottom:none;border-top:none;"></div>
<span class="t" style="font-family:'Liberation Sans', sans-serif;font-size:21.5px;font-weight:700;color:#000;line-height:21.5px;letter-spacing:-0.375px;left:35.8px;top:957.6px;">Console</span>
<span class="t" style="font-family:'Liberation Sans', sans-serif;font-size:21.5px;font-weight:700;color:#000;line-height:21.5px;letter-spacing:0.248px;left:155.5px;top:957.6px;">Terminal</span>
<svg class="a" style="left:256.3px;top:961px;" width="14" height="14" viewBox="0 0 14 14"><path d="M1.5 1.5L12.5 12.5M12.5 1.5L1.5 12.5" stroke="#bdbdbd" stroke-width="3.6" fill="none"/></svg>
<span class="t" style="font-family:'Liberation Sans', sans-serif;font-size:21.5px;font-weight:700;color:#000;line-height:21.5px;letter-spacing:-0.547px;left:309px;top:957.6px;">Jobs</span>
<svg class="a" style="left:367.3px;top:961px;" width="14" height="14" viewBox="0 0 14 14"><path d="M1.5 1.5L12.5 12.5M12.5 1.5L1.5 12.5" stroke="#bdbdbd" stroke-width="3.6" fill="none"/></svg>
<svg class="a" style="left:1522px;top:969.2px;" width="28" height="11.6" viewBox="0 0 28 11.6"><path d="M0 11.6V3.5Q0 0 3.5 0H24.5Q28 0 28 3.5V11.6Z" fill="#8b9197"/><rect x="2.2" y="5.5" width="23.6" height="4.2" fill="#e9eaec"/></svg>
<svg class="a" style="left:1558px;top:957.2px;" width="28" height="23.6" viewBox="0 0 28 23.6"><path d="M0 23.6V3.5Q0 0 3.5 0H24.5Q28 0 28 3.5V23.6Z" fill="#8b9197"/><rect x="2.2" y="5.5" width="23.6" height="16" fill="#e9eaec"/></svg>
<div class="a" style="left:18px;top:1031px;width:1586px;height:2px;background:#d6dadc;"></div>
<span class="t" style="font-family:'Liberation Sans', sans-serif;font-size:23px;font-weight:400;color:#333;line-height:23px;letter-spacing:1.636px;left:42.9px;top:1004.03px;">~/</span>
<svg class="a" style="left:72.5px;top:1001.5px;" width="25" height="20" viewBox="0 0 25 20"><path d="M1 19Q2 8 13 7.5V1L24 10L13 18.5V12.5Q6 12 1 19Z" fill="#e4e7ec" stroke="#d0d4da" stroke-width="1.1" stroke-linejoin="round"/></svg>
<svg class="a" style="left:1555px;top:996px;" width="39" height="31" viewBox="0 0 39 31"><path d="M22 16L38 1" stroke="#c9ccd0" stroke-width="1.6" stroke-linecap="round" fill="none"/><path d="M17 14L24 20L20 29Q9 31 1 27Q11 23 17 14Z" fill="#eceef0" stroke="#c3c7cb" stroke-width="1"/><path d="M7 26L10 29M11 23L15 29M14 20L19 28" stroke="#cfd2d6" stroke-width="0.8"/></svg>
<div class="a" style="left:18px;top:1033px;width:1552px;height:695px;background:#fff;"></div>
<div class="a" style="left:18px;top:1728px;width:1586px;height:2px;background:#d6dadc;"></div>
<div class="a" style="left:1570px;top:1033px;width:34px;height:695px;background:#f1f1f1;"></div>
<svg class="a" style="left:1578.5px;top:1046.5px;" width="17" height="9" viewBox="0 0 17 9"><path d="M0 9L8.5 0L17 9Z" fill="#505050"/></svg>
<div class="a" style="left:1572px;top:1232.6px;width:30px;height:462.4px;background:#c1c1c1;"></div>
<svg class="a" style="left:1578.5px;top:1706.5px;" width="17" height="9" viewBox="0 0 17 9"><path d="M0 0L8.5 9L17 0Z" fill="#a3a3a3"/></svg>
<pre class="con" style="left:30px;top:1061.2px;">R ist ein Gemeinschaftsprojekt mit vielen Beitragenden.
Tippen Sie 'contributors()' für mehr Information und 'citation()',
um zu erfahren, wie R oder R packages in Publikationen zitiert werden können.

Tippen Sie 'demo()' für einige Demos, 'help()' für on-line Hilfe, oder
'help.start()' für eine HTML Browserschnittstelle zur Hilfe.
Tippen Sie 'q()', um R zu verlassen.

<span style="color:#0000cd">&gt; library(readr)</span>
<span style="color:#0000cd">&gt; data_final &lt;- read_delim("R_Studio/data_final.csv", </span>
<span style="color:#0000cd">+     ";", escape_double = FALSE, na = "NA", </span>
<span style="color:#0000cd">+     trim_ws = TRUE)</span>

<span class="dsh" style="color:#00979d">--</span> <b>Column specification</b> <span class="dsh" style="color:#00979d">--------------------------------------------------------------------</span>
cols(
  .default = col_double()
)
<span style="color:#00979d">i</span> Use <span style="background:#d4d4d4">`spec()`</span> for the full column specifications.

<span style="color:#0000cd">&gt; View(data_final)</span>
<span style="color:#0000cd">&gt; </span></pre>
<div class="a" style="left:417px;top:1051.5px;width:3px;height:3px;background:#3a3ad0;"></div>
<div class="a" style="left:64.5px;top:1681px;width:2px;height:31px;background:#b8b8b8;"></div>
<div class="a" style="left:1620px;top:151px;width:1099px;height:574px;background:#f4f8f9;border:2px solid #d6dadc;border-radius:7px 7px 0 0;"></div>
<div class="a" style="left:1622px;top:153px;width:1095px;height:44px;background:#e5e6e8;border-radius:6px 6px 0 0;"></div>
<div class="a" style="left:1622px;top:197px;width:1095px;height:2px;background:#d6dadc;"></div>
<div class="a" style="left:1622px;top:153px;width:170.5px;height:47px;background:#f4f8f9;border:2px solid #d6dadc;border-radius:5px 5px 0 0;border-bottom:none;border-left:none;border-top:none;"></div>
<div class="a" style="left:1791.5px;top:153px;width:116px;height:44px;background:#ebecee;border:2px solid #dcdfe1;border-radius:4px 4px 0 0;border-bottom:none;border-top:none;"></div>
<div class="a" style="left:1906.5px;top:153px;width:167.5px;height:44px;background:#ebecee;border:2px solid #dcdfe1;border-radius:4px 4px 0 0;border-bottom:none;border-top:none;"></div>
<div class="a" style="left:2073px;top:153px;width:119px;height:44px;background:#ebecee;border:2px solid #dcdfe1;border-radius:4px 4px 0 0;border-bottom:none;border-top:none;"></div>
<span class="t" style="font-family:'Liberation Sans', sans-serif;font-size:21.5px;font-weight:700;color:#000;line-height:21.5px;letter-spacing:0.145px;left:1639.5px;top:167.6px;">Environment</span>
<span class="t" style="font-family:'Liberation Sans', sans-serif;font-size:21.5px;font-weight:700;color:#000;line-height:21.5px;letter-spacing:0.417px;left:1810.5px;top:167.6px;">History</span>
<span class="t" style="font-family:'Liberation Sans', sans-serif;font-size:21.5px;font-weight:700;color:#000;line-height:21.5px;letter-spacing:-0.200px;left:1925.5px;top:167.6px;">Connections</span>
<span class="t" style="font-family:'Liberation Sans', sans-serif;font-size:21.5px;font-weight:700;color:#000;line-height:21.5px;letter-spacing:0.346px;left:2091.5px;top:167.6px;">Tutorial</span>
<svg class="a" style="left:2636px;top:179px;" width="28" height="11.6" viewBox="0 0 28 11.6"><path d="M0 11.6V3.5Q0 0 3.5 0H24.5Q28 0 28 3.5V11.6Z" fill="#8b9197"/><rect x="2.2" y="5.5" width="23.6" height="4.2" fill="#e9eaec"/></svg>
<svg class="a" style="left:2672px;top:167px;" width="28" height="23.6" viewBox="0 0 28 23.6"><path d="M0 23.6V3.5Q0 0 3.5 0H24.5Q28 0 28 3.5V23.6Z" fill="#8b9197"/><rect x="2.2" y="5.5" width="23.6" height="16" fill="#e9eaec"/></svg>
<div class="a" style="left:1622px;top:241px;width:1095px;height:2px;background:#d6dadc;"></div>
<svg class="a" style="left:1634px;top:209.5px;" width="40" height="28" viewBox="0 0 40 28"><defs><linearGradient id="fg2" x1="0" y1="0" x2="0" y2="1"><stop offset="0" stop-color="#e9b94a"/><stop offset="1" stop-color="#f8e08c"/></linearGradient></defs><path d="M3 23V6.5Q3 4.5 5 4.5H11L14 7.5H24Q26 7.5 26 9.5V13" fill="#f3dc83" stroke="#c9a132" stroke-width="1.3"/><path d="M8 6L10 2.5H21L23 6V14H8Z" fill="#eceef1" stroke="#bfc4c9" stroke-width="1"/><path d="M6.5 12H29.5L25.5 24.5H2.5Z" fill="url(#fg2)" stroke="#c49a1c" stroke-width="1.3" stroke-linejoin="round"/><path d="M18.5 15Q20 7 29 7.3V3L39 9.3L29 15.7V11.5Q22.5 11 18.5 15Z" fill="#1fb287"/></svg>
<svg class="a" style="left:1688px;top:210.8px;" width="26" height="26" viewBox="0 0 26 26"><path d="M1 2.5Q1 1 2.5 1H23.5Q25 1 25 2.5V23.5Q25 25 23.5 25H2.5Q1 25 1 23.5Z" fill="#6aa5de" stroke="#5b93cf" stroke-width="1.3"/><rect x="5" y="2" width="16" height="10" fill="#fff"/><rect x="7" y="16" width="12" height="9" fill="#fff"/><rect x="9" y="18" width="4" height="7" fill="#6aa5de"/></svg>
<div class="a" style="left:1730px;top:205px;width:2px;height:31px;background:#dde0e3;"></div>
<svg class="a" style="left:1745.5px;top:211px;" width="38" height="24" viewBox="0 0 38 24"><rect x="0.7" y="0.7" width="25" height="22.6" rx="2" fill="#fff" stroke="#b9bec4" stroke-width="1.2"/><rect x="0.7" y="0.7" width="25" height="5" fill="#dfe3e7" stroke="#b9bec4" stroke-width="1.2"/><path d="M9 5.7V23.3M17.4 5.7V23.3M0.7 11.5H25.7M0.7 17.4H25.7" stroke="#c5cacf" stroke-width="1.1"/><path d="M15 13Q17 5.5 26.5 6V2L37 8L26.5 14.5V10Q19 9.5 15 13Z" fill="#22b07d"/></svg>
<span class="t" style="font-family:'Liberation Sans', sans-serif;font-size:21.5px;font-weight:400;color:#222;line-height:21.5px;letter-spacing:0.321px;left:1788px;top:215.5px;">Import Dataset</span>
<svg class="a" style="left:1947.6px;top:222.1px;" width="10.4" height="5.4" viewBox="0 0 10.4 5.4"><path d="M0 0H10.4L5.2 5.4Z" fill="#111"/></svg>
<div class="a" style="left:1973.8px;top:205px;width:2px;height:31px;background:#dde0e3;"></div>
<svg class="a" style="left:1988.5px;top:205px;" width="32" height="32" viewBox="0 0 32 32"><ellipse cx="19.5" cy="29.3" rx="11" ry="2.3" fill="#bcc3cc" opacity="0.85"/><path d="M22.4 9.6L30.2 0.8" stroke="#c9525c" stroke-width="3.5" stroke-linecap="round"/><path d="M23 8.2L29.5 0.9" stroke="#e0808a" stroke-width="1.1" stroke-linecap="round"/><path d="M19.1 8.3Q22.3 9 23.4 12.2Q22.5 22 15.9 30.5L10 30.8L0.2 19Q12 15.5 19.1 8.3Z" fill="#dfba5e"/><path d="M19.1 8.3Q12 15.5 0.2 19L5 24.8Q14 19 20.5 9Z" fill="#e9cc7c"/><path d="M13.6 11.2L21.1 17.75M10.66 14.16L19.15 22" stroke="#b87a1c" stroke-width="1.7" fill="none"/></svg>
<svg class="a" style="left:2538.7px;top:212.8px;" width="23" height="20" viewBox="0 0 23 20"><rect x="0" y="0" width="22.5" height="1.8" fill="#b5b8bb"/><rect x="0" y="6.2" width="22.5" height="1.8" fill="#b5b8bb"/><rect x="0" y="12.4" width="22.5" height="1.8" fill="#b5b8bb"/><rect x="0" y="18.4" width="22.5" height="1.8" fill="#b5b8bb"/></svg>
<span class="t" style="font-family:'Liberation Sans', sans-serif;font-size:21.5px;font-weight:400;color:#222;line-height:21.5px;letter-spacing:-0.117px;left:2573px;top:215.5px;">List</span>
<svg class="a" style="left:2619.8px;top:221.8px;" width="10.4" height="5.4" viewBox="0 0 10.4 5.4"><path d="M0 0H10.4L5.2 5.4Z" fill="#111"/></svg>
<div class="a" style="left:2645.6px;top:205px;width:2px;height:31px;background:#dde0e3;"></div>
<svg class="a" style="left:2660.5px;top:205.5px;" width="29" height="30" viewBox="0 0 29 30"><path d="M23.4 3.9A14.3 14.3 0 1 0 28.1 21.3L21.95 18.1A7.4 7.4 0 1 1 18.8 9.26L15.6 13.8H28.3V1.7Z" fill="#e4eaf6" stroke="#9ea5af" stroke-width="1.3" stroke-linejoin="round"/></svg>
<svg class="a" style="left:2699.8px;top:221.8px;" width="10.4" height="5.4" viewBox="0 0 10.4 5.4"><path d="M0 0H10.4L5.2 5.4Z" fill="#111"/></svg>
<div class="a" style="left:1622px;top:289px;width:1095px;height:2px;background:#d6dadc;"></div>
<svg class="a" style="left:1637.5px;top:253px;" width="31" height="28" viewBox="0 0 31 28"><rect x="7" y="0.5" width="17" height="17" rx="3" fill="#b660c6"/><rect x="13" y="10" width="17" height="17" rx="3" fill="#6b97e0"/><rect x="0.5" y="6.5" width="17" height="17" rx="3" fill="#a9c27c"/></svg>
<span class="t" style="font-family:'Liberation Sans', sans-serif;font-size:21.5px;font-weight:400;color:#222;line-height:21.5px;letter-spacing:0.171px;left:1678px;top:259.6px;">Global Environment</span>
<svg class="a" style="left:1883.8px;top:265.8px;" width="10.4" height="5.4" viewBox="0 0 10.4 5.4"><path d="M0 0H10.4L5.2 5.4Z" fill="#111"/></svg>
<div class="a" style="left:2458.5px;top:252.5px;width:243px;height:35px;background:#fff;border:2px solid #d9dcdf;border-radius:7px;"></div>
<svg class="a" style="left:2472px;top:258px;" width="27" height="25" viewBox="0 0 27 25"><circle cx="10.3" cy="10" r="7.9" fill="none" stroke="#a3a8ac" stroke-width="4.2"/><path d="M16 15.5L24.5 23" stroke="#a3a8ac" stroke-width="5.2" stroke-linecap="butt"/></svg>
<div class="a" style="left:1622px;top:291px;width:1063px;height:433px;background:#fff;"></div>
<div class="a" style="left:1622px;top:291px;width:1063px;height:40px;background:#f4f8f9;"></div>
<div class="a" style="left:1622px;top:330.5px;width:1063px;height:2px;background:#dcdfe2;"></div>
<div class="a" style="left:1622px;top:371.5px;width:1063px;height:2px;background:#dcdfe2;"></div>
<div class="a" style="left:1935px;top:332px;width:2px;height:40px;background:#dcdfe2;"></div>
<span class="t" style="left:1631.5px;top:298.458px;font-family:'Liberation Mono', monospace;font-size:26.8px;line-height:26.8px;">Data</span>
<svg class="a" style="left:1632px;top:338px;" width="24" height="24" viewBox="0 0 24 24"><circle cx="12" cy="12" r="11.5" fill="#5b82e0"/><circle cx="12" cy="12" r="11.5" fill="none" stroke="#4267c4" stroke-width="1"/><path d="M5.5 9.5H18.5L12 17.5Z" fill="#fff"/></svg>
<span class="t" style="left:1663.5px;top:338.258px;font-family:'Liberation Mono', monospace;font-size:26.8px;line-height:26.8px;">data_final</span>
<span class="t" style="left:1947.5px;top:338.258px;font-family:'Liberation Mono', monospace;font-size:26.8px;line-height:26.8px;">521 obs. of 33 variables</span>
<svg class="a" style="left:2654.3px;top:338.4px;" width="27.6" height="23.6" viewBox="0 0 27.6 23.6"><rect x="0.7" y="0.7" width="26.2" height="22.2" rx="3" fill="#fff" stroke="#b3b9c0" stroke-width="1.3"/><path d="M0.7 4.6V3.7Q0.7 0.7 3.7 0.7H23.9Q26.9 0.7 26.9 3.7V4.6Z" fill="#cfe9f7" stroke="#b3b9c0" stroke-width="1.3"/><path d="M9.43333 4.6V22.9" stroke="#cfdbe6" stroke-width="1"/><path d="M18.1667 4.6V22.9" stroke="#cfdbe6" stroke-width="1"/><path d="M0.7 10.7H26.9" stroke="#cfdbe6" stroke-width="1"/><path d="M0.7 16.8H26.9" stroke="#cfdbe6" stroke-width="1"/></svg>
<div class="a" style="left:1622px;top:372.6px;width:1063px;height:350.4px;overflow:hidden;">
<span class="t" style="left:60.8px;top:6.2078px;font-family:'Liberation Mono', monospace;font-size:26.8px;line-height:26.8px;">Interview-Nummer (fortlaufend) : num [1:521] 93 99 101 103 1…</span>
<div class="a" style="left:0;top:35.95px;width:1063px;height:2px;background:#dcdfe2"></div>
<span class="t" style="left:60.8px;top:43.3578px;font-family:'Liberation Mono', monospace;font-size:26.8px;line-height:26.8px;">Geschlecht : num [1:521] 1 1 1 2 2 1 2 2 2 2 ...</span>
<div class="a" style="left:0;top:73.1px;width:1063px;height:2px;background:#dcdfe2"></div>
<span class="t" style="left:60.8px;top:80.5078px;font-family:'Liberation Mono', monospace;font-size:26.8px;line-height:26.8px;">Alter: ... Jahre : num [1:521] 26 32 37 44 50 27 29 35 27 29…</span>
<div class="a" style="left:0;top:110.25px;width:1063px;height:2px;background:#dcdfe2"></div>
<span class="t" style="left:60.8px;top:117.658px;font-family:'Liberation Mono', monospace;font-size:26.8px;line-height:26.8px;">Sprachen : num [1:521] 2 1 2 4 2 2 1 2 2 2 ...</span>
<div class="a" style="left:0;top:147.4px;width:1063px;height:2px;background:#dcdfe2"></div>
<span class="t" style="left:60.8px;top:154.808px;font-family:'Liberation Mono', monospace;font-size:26.8px;line-height:26.8px;">Formale Bildung : num [1:521] 12 4 7 9 7 4 8 7 12 12 ...</span>
<div class="a" style="left:0;top:184.55px;width:1063px;height:2px;background:#dcdfe2"></div>
<span class="t" style="left:60.8px;top:191.958px;font-family:'Liberation Mono', monospace;font-size:26.8px;line-height:26.8px;">Erwerbst&lt;e4&gt;tigkeit : num [1:521] 1 1 1 1 1 1 1 1 1 1 ...</span>
<div class="a" style="left:0;top:221.7px;width:1063px;height:2px;background:#dcdfe2"></div>
<span class="t" style="left:60.8px;top:229.108px;font-family:'Liberation Mono', monospace;font-size:26.8px;line-height:26.8px;">Besch&lt;e4&gt;ftigung : num [1:521] 4 4 4 6 6 4 4 4 4 4 ...</span>
<div class="a" style="left:0;top:258.85px;width:1063px;height:2px;background:#dcdfe2"></div>
<span class="t" style="left:60.8px;top:266.258px;font-family:'Liberation Mono', monospace;font-size:26.8px;line-height:26.8px;">berufliche Umorientierung : num [1:521] 1 1 4 2 3 1 1 1 1 1 …</span>
<div class="a" style="left:0;top:296px;width:1063px;height:2px;background:#dcdfe2"></div>
<span class="t" style="left:60.8px;top:303.408px;font-family:'Liberation Mono', monospace;font-size:26.8px;line-height:26.8px;">Berufserfahrung : num [1:521] 2 4 4 4 1 1 2 3 1 1 ...</span>
<div class="a" style="left:0;top:333.15px;width:1063px;height:2px;background:#dcdfe2"></div>
<span class="t" style="left:60.8px;top:340.558px;font-family:'Liberation Mono', monospace;font-size:26.8px;line-height:26.8px;">Arbeitszeit : num [1:521] 1 1 2 1 1 1 1 1 1 1 ...</span>
<div class="a" style="left:0;top:370.3px;width:1063px;height:2px;background:#dcdfe2"></div>
</div>
<div class="a" style="left:2685px;top:291px;width:32px;height:433px;background:#f1f1f1;"></div>
<svg class="a" style="left:2693px;top:305.1px;" width="17" height="9" viewBox="0 0 17 9"><path d="M0 9L8.5 0L17 9Z" fill="#a3a3a3"/></svg>
<div class="a" style="left:2686.5px;top:325.5px;width:29.5px;height:59.5px;background:#c1c1c1;"></div>
<svg class="a" style="left:2693px;top:701px;" width="17" height="9" viewBox="0 0 17 9"><path d="M0 0L8.5 9L17 0Z" fill="#7d7d7d"/></svg>
<div class="a" style="left:1622px;top:723px;width:1095px;height:2px;background:#d6dadc;"></div>
<div class="a" style="left:1620px;top:739px;width:1099px;height:991px;background:#f4f8f9;border:2px solid #d6dadc;border-radius:7px 7px 0 0;"></div>
<div class="a" style="left:1622px;top:741px;width:1095px;height:44px;background:#e5e6e8;border-radius:6px 6px 0 0;"></div>
<div class="a" style="left:1622px;top:785px;width:1095px;height:2px;background:#d6dadc;"></div>
<div class="a" style="left:1622px;top:741px;width:83px;height:47px;background:#f4f8f9;border:2px solid #d6dadc;border-radius:5px 5px 0 0;border-bottom:none;border-left:none;border-top:none;"></div>
<div class="a" style="left:1704px;top:741px;width:91px;height:44px;background:#ebecee;border:2px solid #dcdfe1;border-radius:4px 4px 0 0;border-bottom:none;border-top:none;"></div>
<div class="a" style="left:1794px;top:741px;width:134.5px;height:44px;background:#ebecee;border:2px solid #dcdfe1;border-radius:4px 4px 0 0;border-bottom:none;border-top:none;"></div>
<div class="a" style="left:1927.5px;top:741px;width:88px;height:44px;background:#ebecee;border:2px solid #dcdfe1;border-radius:4px 4px 0 0;border-bottom:none;border-top:none;"></div>
<div class="a" style="left:2014.5px;top:741px;width:110px;height:44px;background:#ebecee;border:2px solid #dcdfe1;border-radius:4px 4px 0 0;border-bottom:none;border-top:none;"></div>
<span class="t" style="font-family:'Liberation Sans', sans-serif;font-size:21.5px;font-weight:700;color:#000;line-height:21.5px;letter-spacing:-0.580px;left:1639.7px;top:755.5px;">Files</span>
<span class="t" style="font-family:'Liberation Sans', sans-serif;font-size:21.5px;font-weight:700;color:#000;line-height:21.5px;letter-spacing:-0.096px;left:1723.6px;top:755.5px;">Plots</span>
<span class="t" style="font-family:'Liberation Sans', sans-serif;font-size:21.5px;font-weight:700;color:#000;line-height:21.5px;letter-spacing:-0.440px;left:1813.3px;top:755.5px;">Packages</span>
<span class="t" style="font-family:'Liberation Sans', sans-serif;font-size:21.5px;font-weight:700;color:#000;line-height:21.5px;letter-spacing:0.577px;left:1946.6px;top:755.5px;">Help</span>
<span class="t" style="font-family:'Liberation Sans', sans-serif;font-size:21.5px;font-weight:700;color:#000;line-height:21.5px;letter-spacing:0.594px;left:2033.4px;top:755.5px;">Viewer</span>
<svg class="a" style="left:2636px;top:767px;" width="28" height="11.6" viewBox="0 0 28 11.6"><path d="M0 11.6V3.5Q0 0 3.5 0H24.5Q28 0 28 3.5V11.6Z" fill="#8b9197"/><rect x="2.2" y="5.5" width="23.6" height="4.2" fill="#e9eaec"/></svg>
<svg class="a" style="left:2672px;top:755px;" width="28" height="23.6" viewBox="0 0 28 23.6"><path d="M0 23.6V3.5Q0 0 3.5 0H24.5Q28 0 28 3.5V23.6Z" fill="#8b9197"/><rect x="2.2" y="5.5" width="23.6" height="16" fill="#e9eaec"/></svg>
<div class="a" style="left:1622px;top:829px;width:1095px;height:2px;background:#d6dadc;"></div>
<svg class="a" style="left:1634px;top:797px;" width="37" height="27" viewBox="0 0 37 27"><defs><linearGradient id="nfg" x1="0" y1="0" x2="0" y2="1"><stop offset="0" stop-color="#fbeeb0"/><stop offset="1" stop-color="#efc94f"/></linearGradient></defs><path d="M19 26V6Q19 1.5 23.5 1.5H32Q36.3 1.5 36.3 6V26Z" fill="#f6e7a6" stroke="#d2ab3a" stroke-width="1.2"/><path d="M6.5 26V9.5H32.5Q34 9.5 34 11V26Z" fill="url(#nfg)" stroke="#c9a02a" stroke-width="1.2"/><circle cx="9.5" cy="9.5" r="9.5" fill="#159a63"/><path d="M3.5 9.5H15.5 M9.5 3.5V15.5" stroke="#fff" stroke-width="4.2" fill="none"/></svg>
<span class="t" style="font-family:'Liberation Sans', sans-serif;font-size:21.5px;font-weight:400;color:#222;line-height:21.5px;letter-spacing:0.126px;left:1678px;top:803.8px;">New Folder</span>
<div class="a" style="left:1809px;top:793px;width:2px;height:31px;background:#dde0e3;"></div>
<svg class="a" style="left:1823px;top:797px;" width="34" height="28" viewBox="0 0 34 28"><rect x="11" y="3" width="22" height="24" fill="#fff" stroke="#d9dde0" stroke-width="1.2"/><circle cx="10" cy="10" r="10" fill="#b42222"/><path d="M5.5 5.5L14.5 14.5M14.5 5.5L5.5 14.5" stroke="#fff" stroke-width="3.6"/></svg>
<span class="t" style="font-family:'Liberation Sans', sans-serif;font-size:21.5px;font-weight:400;color:#222;line-height:21.5px;letter-spacing:0.141px;left:1867px;top:803.8px;">Delete</span>
<svg class="a" style="left:1954px;top:799.3px;" width="32" height="26" viewBox="0 0 32 26"><rect x="0.6" y="0.6" width="18" height="20" fill="#fff" stroke="#c5c9ce" stroke-width="1.2"/><rect x="12.5" y="4.5" width="19" height="21" fill="#fff" stroke="#aeb3b9" stroke-width="1.2"/><path d="M7.5 11.5H16.5V7L25 14.5L16.5 22V17.5H7.5Z" fill="#1f9fe2"/></svg>
<span class="t" style="font-family:'Liberation Sans', sans-serif;font-size:21.5px;font-weight:400;color:#222;line-height:21.5px;letter-spacing:-0.411px;left:1994px;top:803.8px;">Rename</span>
<div class="a" style="left:2092.4px;top:793px;width:2px;height:31px;background:#dde0e3;"></div>
<svg class="a" style="left:2111.6px;top:795.3px;" width="31" height="31" viewBox="0 0 31 31"><path d="M26.32 12.62L30.63 13.21L30.63 17.79L26.32 18.38L25.19 21.12L27.81 24.58L24.58 27.81L21.12 25.19L18.38 26.32L17.79 30.63L13.21 30.63L12.62 26.32L9.88 25.19L6.42 27.81L3.19 24.58L5.81 21.12L4.68 18.38L0.37 17.79L0.37 13.21L4.68 12.62L5.81 9.88L3.19 6.42L6.42 3.19L9.88 5.81L12.62 4.68L13.21 0.37L17.79 0.37L18.38 4.68L21.12 5.81L24.58 3.19L27.81 6.42L25.19 9.88Z" fill="#3f9fd8" stroke="#2b7fb8" stroke-width="1" stroke-linejoin="round"/><circle cx="15.5" cy="15.5" r="6.2" fill="#a9dcf5"/><circle cx="15.5" cy="15.5" r="3.4" fill="#f4f8f9"/></svg>
<span class="t" style="font-family:'Liberation Sans', sans-serif;font-size:21.5px;font-weight:400;color:#222;line-height:21.5px;letter-spacing:0.779px;left:2151px;top:803.8px;">More</span>
<svg class="a" style="left:2217.3px;top:809.8px;" width="10.4" height="5.4" viewBox="0 0 10.4 5.4"><path d="M0 0H10.4L5.2 5.4Z" fill="#111"/></svg>
<svg class="a" style="left:2678px;top:793.2px;" width="29" height="30" viewBox="0 0 29 30"><path d="M23.4 3.9A14.3 14.3 0 1 0 28.1 21.3L21.95 18.1A7.4 7.4 0 1 1 18.8 9.26L15.6 13.8H28.3V1.7Z" fill="#ebeff7" stroke="#bcc2ca" stroke-width="1.3" stroke-linejoin="round"/></svg>
<div class="a" style="left:1622px;top:871px;width:1095px;height:2px;background:#d6dadc;"></div>
<div class="a" style="left:1630.5px;top:841px;width:25px;height:25px;background:#fff;border:2px solid #a9acaf;border-radius:6px;"></div>
<svg class="a" style="left:1671px;top:834.7px;" width="34" height="30" viewBox="0 0 34 30"><path d="M5 14V29H29V14L17 4Z" fill="#eceff2" stroke="#b7bcc2" stroke-width="1"/><rect x="13.5" y="17.5" width="7" height="11.5" fill="#b87333"/><path d="M1.5 16L17 2L32.5 16" fill="none" stroke="#c0392b" stroke-width="3.4" stroke-linejoin="miter"/></svg>
<span class="t" style="font-family:'Liberation Sans', sans-serif;font-size:21.5px;font-weight:400;color:#3c5ec4;line-height:21.5px;letter-spacing:0.335px;left:1720px;top:841.4px;">Home</span>
<svg class="a" style="left:1790px;top:842px;" width="12" height="20" viewBox="0 0 12 20"><path d="M2 1L10 10L2 19" stroke="#c9cdd1" stroke-width="1.8" fill="none"/></svg>
<span class="t" style="font-family:'Liberation Sans', sans-serif;font-size:21.5px;font-weight:400;color:#3c5ec4;line-height:21.5px;letter-spacing:-0.544px;left:1813px;top:841.4px;">R_Studio</span>
<div class="a" style="left:2677.8px;top:832px;width:2px;height:39px;background:#d6dadc;"></div>
<span class="t" style="font-family:'Liberation Sans', sans-serif;font-size:24px;font-weight:400;color:#111;line-height:24px;letter-spacing:-0.172px;left:2691.5px;top:840.284px;">...</span>
<div class="a" style="left:1622px;top:909px;width:1095px;height:2px;background:#d6dadc;"></div>
<div class="a" style="left:1680px;top:873px;width:2px;height:36px;background:#dcdfe2;"></div>
<div class="a" style="left:1732px;top:873px;width:2px;height:36px;background:#dcdfe2;"></div>
<div class="a" style="left:2235.6px;top:873px;width:2px;height:36px;background:#dcdfe2;"></div>
<div class="a" style="left:2396px;top:873px;width:2px;height:36px;background:#dcdfe2;"></div>
<svg class="a" style="left:1744px;top:884.5px;" width="20" height="12" viewBox="0 0 20 12"><path d="M0 12L10 0L20 12Z" fill="#7f8591"/></svg>
<span class="t" style="font-family:'Liberation Sans', sans-serif;font-size:21.5px;font-weight:400;color:#4d4d4d;line-height:21.5px;letter-spacing:0.060px;left:1772.2px;top:882.7px;">Name</span>
<span class="t" style="font-family:'Liberation Sans', sans-serif;font-size:21.5px;font-weight:400;color:#4d4d4d;line-height:21.5px;letter-spacing:-0.707px;left:2241.5px;top:882.7px;">Size</span>
<span class="t" style="font-family:'Liberation Sans', sans-serif;font-size:21.5px;font-weight:400;color:#4d4d4d;line-height:21.5px;letter-spacing:0.842px;left:2401.5px;top:882.7px;">Modified</span>
<div class="a" style="left:1622px;top:911px;width:1095px;height:817px;background:#fff;"></div>
<svg class="a" style="left:1695px;top:916.5px;" width="27" height="27" viewBox="0 0 27 27"><path d="M1 12L12 1L23 12H16.5V19H26V26H8V12Z" fill="#35c07a" stroke="#1d9a58" stroke-width="1.3" stroke-linejoin="round"/></svg>
<span class="t" style="font-family:'Liberation Sans', sans-serif;font-size:21.5px;font-weight:400;color:#1a1a8c;line-height:21.5px;letter-spacing:-0.477px;left:1739.5px;top:927.9px;">..</span>
<div class="a" style="left:1638.5px;top:968.2px;width:25px;height:25px;background:#fff;border:2px solid #a9acaf;border-radius:6px;"></div>
<svg class="a" style="left:1692px;top:960.2px;" width="31" height="31" viewBox="0 0 31 31"><path d="M6.5 1.7H21L31 11.5V30.3H6.5Z" fill="#fff" stroke="#c4c8cc" stroke-width="1.2"/><path d="M21 1.7V11.5H31" fill="#f2f4f6" stroke="#c4c8cc" stroke-width="1.1"/><circle cx="11" cy="14.3" r="8" fill="#f3f5fa" stroke="#9aa0a6" stroke-width="1.2"/><path d="M11 9V14.3H14.5" stroke="#222" stroke-width="1.4" fill="none"/></svg>
<span class="t" style="font-family:'Liberation Sans', sans-serif;font-size:21.5px;font-weight:400;color:#1a1a8c;line-height:21.5px;letter-spacing:0.797px;left:1739.5px;top:972.9px;">.Rhistory</span>
<span class="t" style="font-family:'Liberation Sans', sans-serif;font-size:21.5px;font-weight:400;color:#222;line-height:21.5px;letter-spacing:0.159px;left:2243.5px;top:972.9px;">3.8 KB</span>
<span class="t" style="font-family:'Liberation Sans', sans-serif;font-size:21.5px;font-weight:400;color:#222;line-height:21.5px;letter-spacing:0.647px;left:2404px;top:972.9px;">Dec 6, 2020, 10:32 PM</span>
<div class="a" style="left:1638.5px;top:1014.2px;width:25px;height:25px;background:#fff;border:2px solid #a9acaf;border-radius:6px;"></div>
<svg class="a" style="left:1694px;top:1007.5px;" width="31.5" height="30.2" viewBox="0 0 31.5 30.2"><rect x="0.7" y="0.7" width="30.1" height="28.8" rx="3" fill="#fff" stroke="#b3b9c0" stroke-width="1.3"/><path d="M0.7 4.6V3.7Q0.7 0.7 3.7 0.7H27.8Q30.8 0.7 30.8 3.7V4.6Z" fill="#d5dbe3" stroke="#b3b9c0" stroke-width="1.3"/><path d="M8.225 4.6V29.5" stroke="#cdd2d8" stroke-width="1"/><path d="M15.75 4.6V29.5" stroke="#cdd2d8" stroke-width="1"/><path d="M23.275 4.6V29.5" stroke="#cdd2d8" stroke-width="1"/><path d="M0.7 9.58H30.8" stroke="#cdd2d8" stroke-width="1"/><path d="M0.7 14.56H30.8" stroke="#cdd2d8" stroke-width="1"/><path d="M0.7 19.54H30.8" stroke="#cdd2d8" stroke-width="1"/><path d="M0.7 24.52H30.8" stroke="#cdd2d8" stroke-width="1"/></svg>
<span class="t" style="font-family:'Liberation Sans', sans-serif;font-size:21.5px;font-weight:400;color:#1a1a8c;line-height:21.5px;letter-spacing:0.944px;left:1739.5px;top:1018.9px;">data_bigfiveundbsw_2020-12-06_21-38.csv</span>
<span class="t" style="font-family:'Liberation Sans', sans-serif;font-size:21.5px;font-weight:400;color:#222;line-height:21.5px;letter-spacing:0.286px;left:2243.5px;top:1018.9px;">64.3 KB</span>
<span class="t" style="font-family:'Liberation Sans', sans-serif;font-size:21.5px;font-weight:400;color:#222;line-height:21.5px;letter-spacing:0.627px;left:2404px;top:1018.9px;">Dec 6, 2020, 9:39 PM</span>
<div class="a" style="left:1638.5px;top:1060.2px;width:25px;height:25px;background:#fff;border:2px solid #a9acaf;border-radius:6px;"></div>
<svg class="a" style="left:1694px;top:1053.5px;" width="31.5" height="30.2" viewBox="0 0 31.5 30.2"><rect x="0.7" y="0.7" width="30.1" height="28.8" rx="3" fill="#fff" stroke="#b3b9c0" stroke-width="1.3"/><path d="M0.7 4.6V3.7Q0.7 0.7 3.7 0.7H27.8Q30.8 0.7 30.8 3.7V4.6Z" fill="#d5dbe3" stroke="#b3b9c0" stroke-width="1.3"/><path d="M8.225 4.6V29.5" stroke="#cdd2d8" stroke-width="1"/><path d="M15.75 4.6V29.5" stroke="#cdd2d8" stroke-width="1"/><path d="M23.275 4.6V29.5" stroke="#cdd2d8" stroke-width="1"/><path d="M0.7 9.58H30.8" stroke="#cdd2d8" stroke-width="1"/><path d="M0.7 14.56H30.8" stroke="#cdd2d8" stroke-width="1"/><path d="M0.7 19.54H30.8" stroke="#cdd2d8" stroke-width="1"/><path d="M0.7 24.52H30.8" stroke="#cdd2d8" stroke-width="1"/></svg>
<span class="t" style="font-family:'Liberation Sans', sans-serif;font-size:21.5px;font-weight:400;color:#1a1a8c;line-height:21.5px;letter-spacing:0.645px;left:1739.5px;top:1064.9px;">data_final.csv</span>
<span class="t" style="font-family:'Liberation Sans', sans-serif;font-size:21.5px;font-weight:400;color:#222;line-height:21.5px;letter-spacing:0.286px;left:2243.5px;top:1064.9px;">37.5 KB</span>
<span class="t" style="font-family:'Liberation Sans', sans-serif;font-size:21.5px;font-weight:400;color:#222;line-height:21.5px;letter-spacing:0.627px;left:2404px;top:1064.9px;">Dec 6, 2020, 9:32 PM</span>
<div class="a" style="left:1638.5px;top:1106.2px;width:25px;height:25px;background:#fff;border:2px solid #a9acaf;border-radius:6px;"></div>
<svg class="a" style="left:1694px;top:1099.5px;" width="31.5" height="30.2" viewBox="0 0 31.5 30.2"><rect x="0.7" y="0.7" width="30.1" height="28.8" rx="3" fill="#fff" stroke="#b3b9c0" stroke-width="1.3"/><path d="M0.7 4.6V3.7Q0.7 0.7 3.7 0.7H27.8Q30.8 0.7 30.8 3.7V4.6Z" fill="#d5dbe3" stroke="#b3b9c0" stroke-width="1.3"/><path d="M8.225 4.6V29.5" stroke="#cdd2d8" stroke-width="1"/><path d="M15.75 4.6V29.5" stroke="#cdd2d8" stroke-width="1"/><path d="M23.275 4.6V29.5" stroke="#cdd2d8" stroke-width="1"/><path d="M0.7 9.58H30.8" stroke="#cdd2d8" stroke-width="1"/><path d="M0.7 14.56H30.8" stroke="#cdd2d8" stroke-width="1"/><path d="M0.7 19.54H30.8" stroke="#cdd2d8" stroke-width="1"/><path d="M0.7 24.52H30.8" stroke="#cdd2d8" stroke-width="1"/></svg>
<span class="t" style="font-family:'Liberation Sans', sans-serif;font-size:21.5px;font-weight:400;color:#1a1a8c;line-height:21.5px;letter-spacing:0.480px;left:1739.5px;top:1110.9px;">rdata_Final.csv</span>
<span class="t" style="font-family:'Liberation Sans', sans-serif;font-size:21.5px;font-weight:400;color:#222;line-height:21.5px;letter-spacing:0.286px;left:2243.5px;top:1110.9px;">62.4 KB</span>
<span class="t" style="font-family:'Liberation Sans', sans-serif;font-size:21.5px;font-weight:400;color:#222;line-height:21.5px;letter-spacing:0.647px;left:2404px;top:1110.9px;">Dec 6, 2020, 10:05 PM</span>
<div class="a" style="left:1638.5px;top:1152.2px;width:25px;height:25px;background:#fff;border:2px solid #a9acaf;border-radius:6px;"></div>
<svg class="a" style="left:1694px;top:1145.5px;" width="31.5" height="30.2" viewBox="0 0 31.5 30.2"><rect x="0.7" y="0.7" width="30.1" height="28.8" rx="3" fill="#fff" stroke="#b3b9c0" stroke-width="1.3"/><path d="M0.7 4.6V3.7Q0.7 0.7 3.7 0.7H27.8Q30.8 0.7 30.8 3.7V4.6Z" fill="#d5dbe3" stroke="#b3b9c0" stroke-width="1.3"/><path d="M8.225 4.6V29.5" stroke="#cdd2d8" stroke-width="1"/><path d="M15.75 4.6V29.5" stroke="#cdd2d8" stroke-width="1"/><path d="M23.275 4.6V29.5" stroke="#cdd2d8" stroke-width="1"/><path d="M0.7 9.58H30.8" stroke="#cdd2d8" stroke-width="1"/><path d="M0.7 14.56H30.8" stroke="#cdd2d8" stroke-width="1"/><path d="M0.7 19.54H30.8" stroke="#cdd2d8" stroke-width="1"/><path d="M0.7 24.52H30.8" stroke="#cdd2d8" stroke-width="1"/></svg>
<span class="t" style="font-family:'Liberation Sans', sans-serif;font-size:21.5px;font-weight:400;color:#1a1a8c;line-height:21.5px;letter-spacing:0.664px;left:1739.5px;top:1156.9px;">tips.csv</span>
<span class="t" style="font-family:'Liberation Sans', sans-serif;font-size:21.5px;font-weight:400;color:#222;line-height:21.5px;letter-spacing:0.513px;left:2243.5px;top:1156.9px;">11.1 KB</span>
<span class="t" style="font-family:'Liberation Sans', sans-serif;font-size:21.5px;font-weight:400;color:#222;line-height:21.5px;letter-spacing:0.627px;left:2404px;top:1156.9px;">Dec 6, 2020, 1:09 PM</span>
</body></html>
